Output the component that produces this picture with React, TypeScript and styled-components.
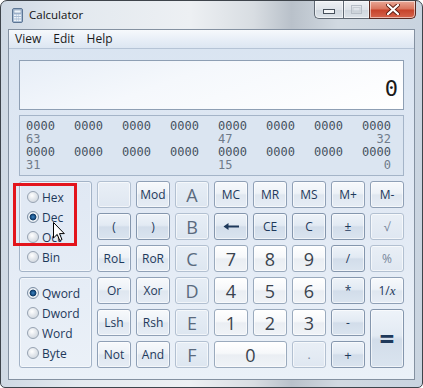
import React from 'react';
import styled, { createGlobalStyle, css } from 'styled-components';

type KeyKind = 'func' | 'op' | 'digit' | 'off' | 'hex';

type KeyDef = {
  label: React.ReactNode;
  kind: KeyKind;
  wide?: boolean;
  tall?: boolean;
  size?: number;
};

const keys: KeyDef[] = [
  { label: '', kind: 'off' },
  { label: 'Mod', kind: 'func' },
  { label: 'A', kind: 'hex' },
  { label: 'MC', kind: 'func' },
  { label: 'MR', kind: 'func' },
  { label: 'MS', kind: 'func' },
  { label: 'M+', kind: 'func' },
  { label: 'M-', kind: 'func' },

  { label: '(', kind: 'op' },
  { label: ')', kind: 'op' },
  { label: 'B', kind: 'hex' },
  { label: 'back', kind: 'op' },
  { label: 'CE', kind: 'op' },
  { label: 'C', kind: 'op' },
  { label: '±', kind: 'op' },
  { label: '√', kind: 'off' },

  { label: 'RoL', kind: 'func' },
  { label: 'RoR', kind: 'func' },
  { label: 'C', kind: 'hex' },
  { label: '7', kind: 'digit' },
  { label: '8', kind: 'digit' },
  { label: '9', kind: 'digit' },
  { label: '/', kind: 'op' },
  { label: '%', kind: 'off' },

  { label: 'Or', kind: 'func' },
  { label: 'Xor', kind: 'func' },
  { label: 'D', kind: 'hex' },
  { label: '4', kind: 'digit' },
  { label: '5', kind: 'digit' },
  { label: '6', kind: 'digit' },
  { label: '*', kind: 'op' },
  { label: 'recip', kind: 'func' },

  { label: 'Lsh', kind: 'func' },
  { label: 'Rsh', kind: 'func' },
  { label: 'E', kind: 'hex' },
  { label: '1', kind: 'digit' },
  { label: '2', kind: 'digit' },
  { label: '3', kind: 'digit' },
  { label: '-', kind: 'op' },
  { label: '=', kind: 'op', tall: true, size: 26 },

  { label: 'Not', kind: 'func' },
  { label: 'And', kind: 'func' },
  { label: 'F', kind: 'hex' },
  { label: '0', kind: 'digit', wide: true },
  { label: '.', kind: 'off' },
  { label: '+', kind: 'op', size: 13 },
];

const bases = ['Hex', 'Dec', 'Oct', 'Bin'];
const words = ['Qword', 'Dword', 'Word', 'Byte'];

const BackArrow = () => (
  <svg width="17" height="9" viewBox="0 0 17 9">
    <path d="M4 4.5 H16" stroke="#1e395b" strokeWidth="2.2" />
    <path d="M0.5 4.5 L5.5 1 V8 Z" fill="#1e395b" />
  </svg>
);

const renderLabel = (label: React.ReactNode) => {
  if (label === 'back') return <BackArrow />;
  if (label === 'recip')
    return (
      <span>
        1/<Italic>x</Italic>
      </span>
    );
  return label;
};

const App: React.FC = () => {
  return (
    <>
      <GlobalStyle />
      <Window>
        <TitleBar>
          <svg width="11" height="15" viewBox="0 0 11 15">
            <rect x="0.5" y="0.5" width="10" height="14" rx="1.5" fill="#a9bdd4" stroke="#5d7694" />
            <rect x="2" y="2" width="7" height="3" fill="#eef5fb" stroke="#7f95ae" strokeWidth="0.6" />
            <g fill="#eef3f8">
              <rect x="2" y="6.5" width="2" height="1.5" />
              <rect x="4.5" y="6.5" width="2" height="1.5" />
              <rect x="7" y="6.5" width="2" height="1.5" />
              <rect x="2" y="9" width="2" height="1.5" />
              <rect x="4.5" y="9" width="2" height="1.5" />
              <rect x="7" y="9" width="2" height="1.5" />
              <rect x="2" y="11.5" width="2" height="1.5" />
              <rect x="4.5" y="11.5" width="2" height="1.5" />
              <rect x="7" y="11.5" width="2" height="1.5" />
            </g>
          </svg>
          <TitleText>Calculator</TitleText>
          <Caption>
            <CaptionButton $kind="min">
              <svg width="12" height="6" viewBox="0 0 12 6">
                <rect x="0.5" y="0.5" width="11" height="4" fill="#f4f6f8" stroke="#47505b" />
              </svg>
            </CaptionButton>
            <CaptionButton $kind="max">
              <svg width="11" height="9" viewBox="0 0 11 9">
                <rect x="0.5" y="0.5" width="10" height="8" fill="none" stroke="#b7bec7" />
                <rect x="2" y="2.5" width="7" height="4.5" fill="none" stroke="#c7cdd4" />
              </svg>
            </CaptionButton>
            <CaptionButton $kind="close">
              <svg width="14" height="11" viewBox="0 0 14 11">
                <path d="M2 1 L12 10 M12 1 L2 10" stroke="#5b1d12" strokeWidth="4" strokeLinecap="round" />
                <path d="M2 1 L12 10 M12 1 L2 10" stroke="#ffffff" strokeWidth="2.3" strokeLinecap="round" />
              </svg>
            </CaptionButton>
          </Caption>
        </TitleBar>

        <Client>
          <MenuBar>
            <MenuItem>View</MenuItem>
            <MenuItem>Edit</MenuItem>
            <MenuItem>Help</MenuItem>
          </MenuBar>

          <Body>
            <Display>0</Display>

            <BinBox>
              <BinRow>
                {Array.from({ length: 8 }).map((_, i) => (
                  <BinCell key={i}>0000</BinCell>
                ))}
              </BinRow>
              <BinRow>
                <BitLabel $col={1}>63</BitLabel>
                <BitLabel $col={5}>47</BitLabel>
                <BitLabel $col={8} $right>
                  32
                </BitLabel>
              </BinRow>
              <BinRow>
                {Array.from({ length: 8 }).map((_, i) => (
                  <BinCell key={i}>0000</BinCell>
                ))}
              </BinRow>
              <BinRow>
                <BitLabel $col={1}>31</BitLabel>
                <BitLabel $col={5}>15</BitLabel>
                <BitLabel $col={8} $right>
                  0
                </BitLabel>
              </BinRow>
            </BinBox>

            <Keypad>
              <RadioGroup $row={1}>
                {bases.map((b) => (
                  <RadioItem key={b}>
                    <RadioDot $checked={b === 'Dec'} />
                    {b}
                  </RadioItem>
                ))}
              </RadioGroup>
              <RadioGroup $row={4}>
                {words.map((w) => (
                  <RadioItem key={w}>
                    <RadioDot $checked={w === 'Qword'} />
                    {w}
                  </RadioItem>
                ))}
              </RadioGroup>
              {keys.map((k, i) => (
                <Key key={i} $kind={k.kind} $wide={k.wide} $tall={k.tall} $size={k.size}>
                  {renderLabel(k.label)}
                </Key>
              ))}
            </Keypad>
          </Body>
        </Client>

        <Highlight />
        <Pointer width="12" height="20" viewBox="0 0 12 20">
          <path
            d="M0.5 0.5 L0.5 16 L4.2 12.4 L6.8 18.6 L9 17.6 L6.5 11.6 L11.3 11.6 Z"
            fill="#ffffff"
            stroke="#000000"
            strokeWidth="1"
            strokeLinejoin="round"
          />
        </Pointer>
      </Window>
    </>
  );
};

const GlobalStyle = createGlobalStyle`
  html, body {
    margin: 0;
    padding: 0;
    background: #ffffff;
  }
  body {
    font-family: 'Segoe UI', 'Open Sans', 'Noto Sans', sans-serif;
  }
`;

const Window = styled.div`
  position: relative;
  width: 423px;
  height: 388px;
  box-sizing: border-box;
  border: 1px solid #3e444b;
  border-radius: 7px 7px 5px 5px;
  overflow: hidden;
  display: flex;
  flex-direction: column;
  background: linear-gradient(
    to right,
    #cfd9e4 0%,
    #e3e9ef 18%,
    #edf0f3 45%,
    #d8dde2 60%,
    #b9c1ca 69%,
    #d1d9e1 80%,
    #c9d4e0 100%
  );
`;

const TitleBar = styled.div`
  height: 28px;
  display: flex;
  align-items: flex-start;
  padding-left: 11px;

  & > svg {
    margin-top: 7px;
  }
`;

const TitleText = styled.span`
  margin: 6px 0 0 6px;
  font-size: 11.5px;
  line-height: 16px;
  color: #111111;
`;

const Caption = styled.div`
  margin-left: auto;
  margin-right: 6px;
  display: flex;
  height: 18px;
`;

const CaptionButton = styled.div<{ $kind: 'min' | 'max' | 'close' }>`
  box-sizing: border-box;
  height: 18px;
  display: flex;
  align-items: center;
  justify-content: center;
  border: 1px solid #5f6873;
  border-top: none;
  box-shadow: inset 0 0 0 1px rgba(255, 255, 255, 0.55);
  background: linear-gradient(to bottom, #eef1f4, #dfe4ea 50%, #cfd6de 51%, #dce2e8);

  ${(p) =>
    p.$kind === 'min' &&
    css`
      width: 29px;
      border-radius: 0 0 0 5px;
      border-right: none;
      padding-top: 5px;
    `}
  ${(p) =>
    p.$kind === 'max' &&
    css`
      width: 26px;
      border-right: none;
    `}
  ${(p) =>
    p.$kind === 'close' &&
    css`
      width: 47px;
      border-radius: 0 0 5px 0;
      border-color: #5a2a22;
      background: linear-gradient(to bottom, #e9a897, #d9735c 48%, #c6422a 52%, #d5654d);
    `}
`;

const Client = styled.div`
  flex: 1;
  margin: 0 7px 7px;
  border: 1px solid #8491a1;
  display: flex;
  flex-direction: column;
  background: linear-gradient(to bottom, #d9e4f1 0%, #e1e9f4 50%, #ebf1f8 100%);
`;

const MenuBar = styled.div`
  height: 18px;
  display: flex;
  align-items: center;
  border-bottom: 1px solid #b6c4d6;
  background: linear-gradient(to bottom, #f6f9fc, #e9eff7 50%, #dce6f2);
`;

const MenuItem = styled.span`
  padding: 0 6px;
  font-size: 12px;
  line-height: 16px;
  color: #1b1b1b;
`;

const Body = styled.div`
  padding: 11px 10px 0;
  display: flex;
  flex-direction: column;
  gap: 5px;
`;

const Display = styled.div`
  height: 50px;
  box-sizing: border-box;
  border: 1px solid #8e9fb4;
  display: flex;
  align-items: flex-end;
  justify-content: flex-end;
  padding: 0 5px 9px 0;
  font-family: 'DejaVu Sans Mono', 'Liberation Mono', monospace;
  font-size: 22px;
  line-height: 22px;
  color: #1a1a1a;
  background: linear-gradient(160deg, #e7eef7 0%, #f5f8fc 40%, #ffffff 100%);
`;

const BinBox = styled.div`
  height: 61px;
  box-sizing: border-box;
  border: 1px solid #a4b4c8;
  padding: 4px 0 0 6px;
  background: #dbe5f1;
  font-family: 'DejaVu Sans Mono', 'Liberation Mono', monospace;
  font-size: 12px;
  line-height: 13px;
`;

const BinRow = styled.div`
  display: grid;
  grid-template-columns: repeat(7, 48px) 29px;
  height: 13px;
`;

const BinCell = styled.span`
  color: #46525f;
`;

const BitLabel = styled.span<{ $col: number; $right?: boolean }>`
  grid-column: ${(p) => p.$col};
  text-align: ${(p) => (p.$right ? 'right' : 'left')};
  color: #6f7b8a;
`;

const Keypad = styled.div`
  display: grid;
  grid-template-columns: 73px repeat(8, 34px);
  grid-template-rows: repeat(6, 27px);
  gap: 5px;
`;

const RadioGroup = styled.div<{ $row: number }>`
  grid-column: 1;
  grid-row: ${(p) => p.$row} / span 3;
  box-sizing: border-box;
  border: 1px solid #a3b3c7;
  border-radius: 3px;
  box-shadow: inset 0 0 0 1px rgba(255, 255, 255, 0.5);
  padding: 5px 0 0 7px;
  display: flex;
  flex-direction: column;
`;

const RadioItem = styled.div`
  height: 20px;
  display: flex;
  align-items: center;
  gap: 3px;
  font-size: 12px;
  color: #1e395b;
`;

const RadioDot = styled.span<{ $checked?: boolean }>`
  width: 12px;
  height: 12px;
  box-sizing: border-box;
  border-radius: 50%;
  border: 1px solid #97a3b2;
  background: radial-gradient(circle at 40% 35%, #ffffff 0%, #e3e7ec 45%, #c9d0d8 100%);

  ${(p) =>
    p.$checked &&
    css`
      border-color: #7c8ea3;
      background: radial-gradient(
        circle,
        #3e87c4 0px,
        #1b5288 2px,
        #0f3a66 3px,
        #f0f4f8 3.8px,
        #d3dae2 100%
      );
    `}
`;

const Key = styled.div<{ $kind: KeyKind; $wide?: boolean; $tall?: boolean; $size?: number }>`
  box-sizing: border-box;
  display: flex;
  align-items: center;
  justify-content: center;
  border-radius: 3px;
  border: 1px solid #8fa0b6;
  box-shadow: inset 0 0 0 1px rgba(255, 255, 255, 0.6);
  font-size: ${(p) => (p.$size ? `${p.$size}px` : '12px')};
  color: #1e395b;
  user-select: none;
  ${(p) => p.$wide && 'grid-column: span 2;'}
  ${(p) => p.$tall && 'grid-row: span 2; font-weight: 700;'}

  ${(p) =>
    p.$kind === 'func' &&
    css`
      background: linear-gradient(to bottom, #f7f9fc 0%, #edf2f7 45%, #dfe7f0 52%, #e6edf5 100%);
    `}
  ${(p) =>
    p.$kind === 'op' &&
    css`
      border-color: #8496ad;
      background: linear-gradient(to bottom, #eef3f9 0%, #e2eaf3 45%, #d2ddea 52%, #dae4ef 100%);
    `}
  ${(p) =>
    p.$kind === 'digit' &&
    css`
      border-color: #9aaabd;
      font-size: 18px;
      color: #3a434e;
      background: linear-gradient(to bottom, #ffffff 0%, #f6f8fa 45%, #eaeef3 52%, #f0f3f7 100%);
    `}
  ${(p) =>
    p.$kind === 'off' &&
    css`
      border-color: #b2c0d1;
      color: #77869a;
      background: linear-gradient(to bottom, #e9eff6, #dfe7f1);
    `}
  ${(p) =>
    p.$kind === 'hex' &&
    css`
      border-color: #b2c0d1;
      font-size: 18px;
      color: #5a6a7e;
      background: linear-gradient(to bottom, #e7eef6, #dde6f0);
    `}
`;

const Italic = styled.i`
  font-family: 'Liberation Serif', serif;
  font-size: 13px;
`;

const Highlight = styled.div`
  position: absolute;
  left: 12px;
  top: 182px;
  width: 64px;
  height: 63px;
  box-sizing: border-box;
  border: 3px solid #e3141c;
  pointer-events: none;
`;

const Pointer = styled.svg`
  position: absolute;
  left: 52px;
  top: 221px;
`;

export default App;
